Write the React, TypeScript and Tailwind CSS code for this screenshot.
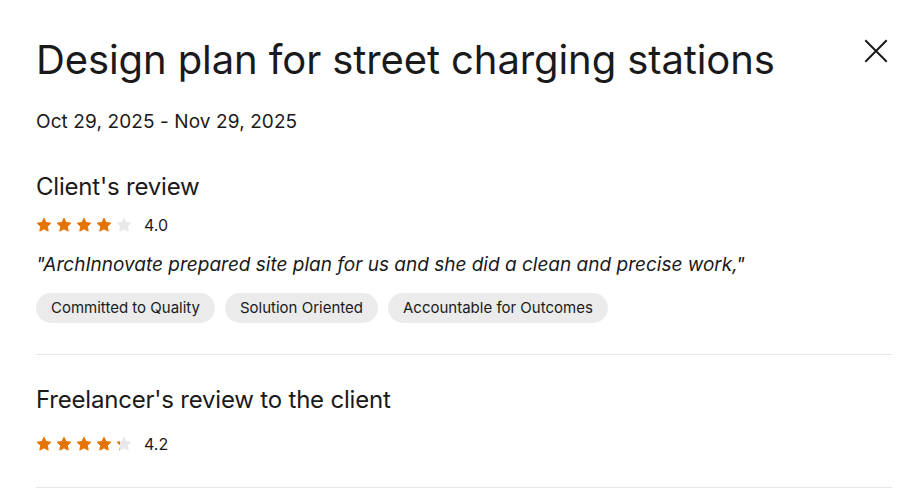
function Star({ fill }: { fill: number }) {
  const id = `star-${Math.round(fill * 100)}`;
  return (
    <svg width="16" height="16" viewBox="0 0 24 24" className="shrink-0">
      <defs>
        <linearGradient id={id} x1="0" x2="1" y1="0" y2="0">
          <stop offset={fill} stopColor="#e57300" />
          <stop offset={fill} stopColor="#e8e8e8" />
        </linearGradient>
      </defs>
      <path
        d="M12 1.8l3.1 6.5 7.1.9-5.2 4.9 1.3 7.1L12 17.8l-6.3 3.4 1.3-7.1-5.2-4.9 7.1-.9z"
        fill={`url(#${id})`}
        stroke={`url(#${id})`}
        strokeWidth="1.5"
        strokeLinejoin="round"
      />
    </svg>
  );
}

function Rating({ value }: { value: number }) {
  return (
    <div className="flex h-5 items-center">
      <div className="flex items-center gap-1">
        {[0, 1, 2, 3, 4].map((i) => (
          <Star key={i} fill={Math.max(0, Math.min(1, value - i))} />
        ))}
      </div>
      <span className="ml-[12px] text-base text-[#1a1a1a]">{value.toFixed(1)}</span>
    </div>
  );
}

const tags = ["Committed to Quality", "Solution Oriented", "Accountable for Outcomes"];

export default function App() {
  return (
    <div className="min-h-screen bg-white pl-[36px] pr-[25px] pt-[36px] font-['Inter',sans-serif] text-[#1a1a1a]">
      <div className="flex items-start justify-between">
        <h1 className="text-[40px] leading-[48px] tracking-[-0.1px]">Design plan for street charging stations</h1>
        <button className="mr-[4px] mt-[3px] text-[#1a1a1a]">
          <svg width="24" height="24" viewBox="0 0 24 24" fill="none" stroke="currentColor" strokeWidth="2" strokeLinecap="square">
            <path d="M2 2l20 20M22 2L2 22" />
          </svg>
        </button>
      </div>
      <p className="mt-[24px] text-[19px] leading-[28px] tracking-[0.1px]">Oct 29, 2025 - Nov 29, 2025</p>

      <section className="border-b border-[#e6e6e6] pb-[31px] pt-[35px]">
        <h2 className="text-[24px] leading-[32px] tracking-[-0.2px]">Client's review</h2>
        <div className="mt-[12px]">
          <Rating value={4.0} />
        </div>
        <p className="mt-[16px] text-[19px] italic leading-[28px]">
          "ArchInnovate prepared site plan for us and she did a clean and precise work,"
        </p>
        <div className="mt-[14px] flex gap-[10px]">
          {tags.map((t) => (
            <span
              key={t}
              className="flex h-[30px] items-center rounded-full bg-[#ebebeb] px-[15px] text-[15px] text-[#1a1a1a]"
            >
              {t}
            </span>
          ))}
        </div>
      </section>

      <section className="border-b border-[#e6e6e6] pb-[33px] pt-[29px]">
        <h2 className="text-[24px] leading-[32px] tracking-[-0.2px]">Freelancer's review to the client</h2>
        <div className="mt-[18px]">
          <Rating value={4.2} />
        </div>
      </section>
    </div>
  );
}
